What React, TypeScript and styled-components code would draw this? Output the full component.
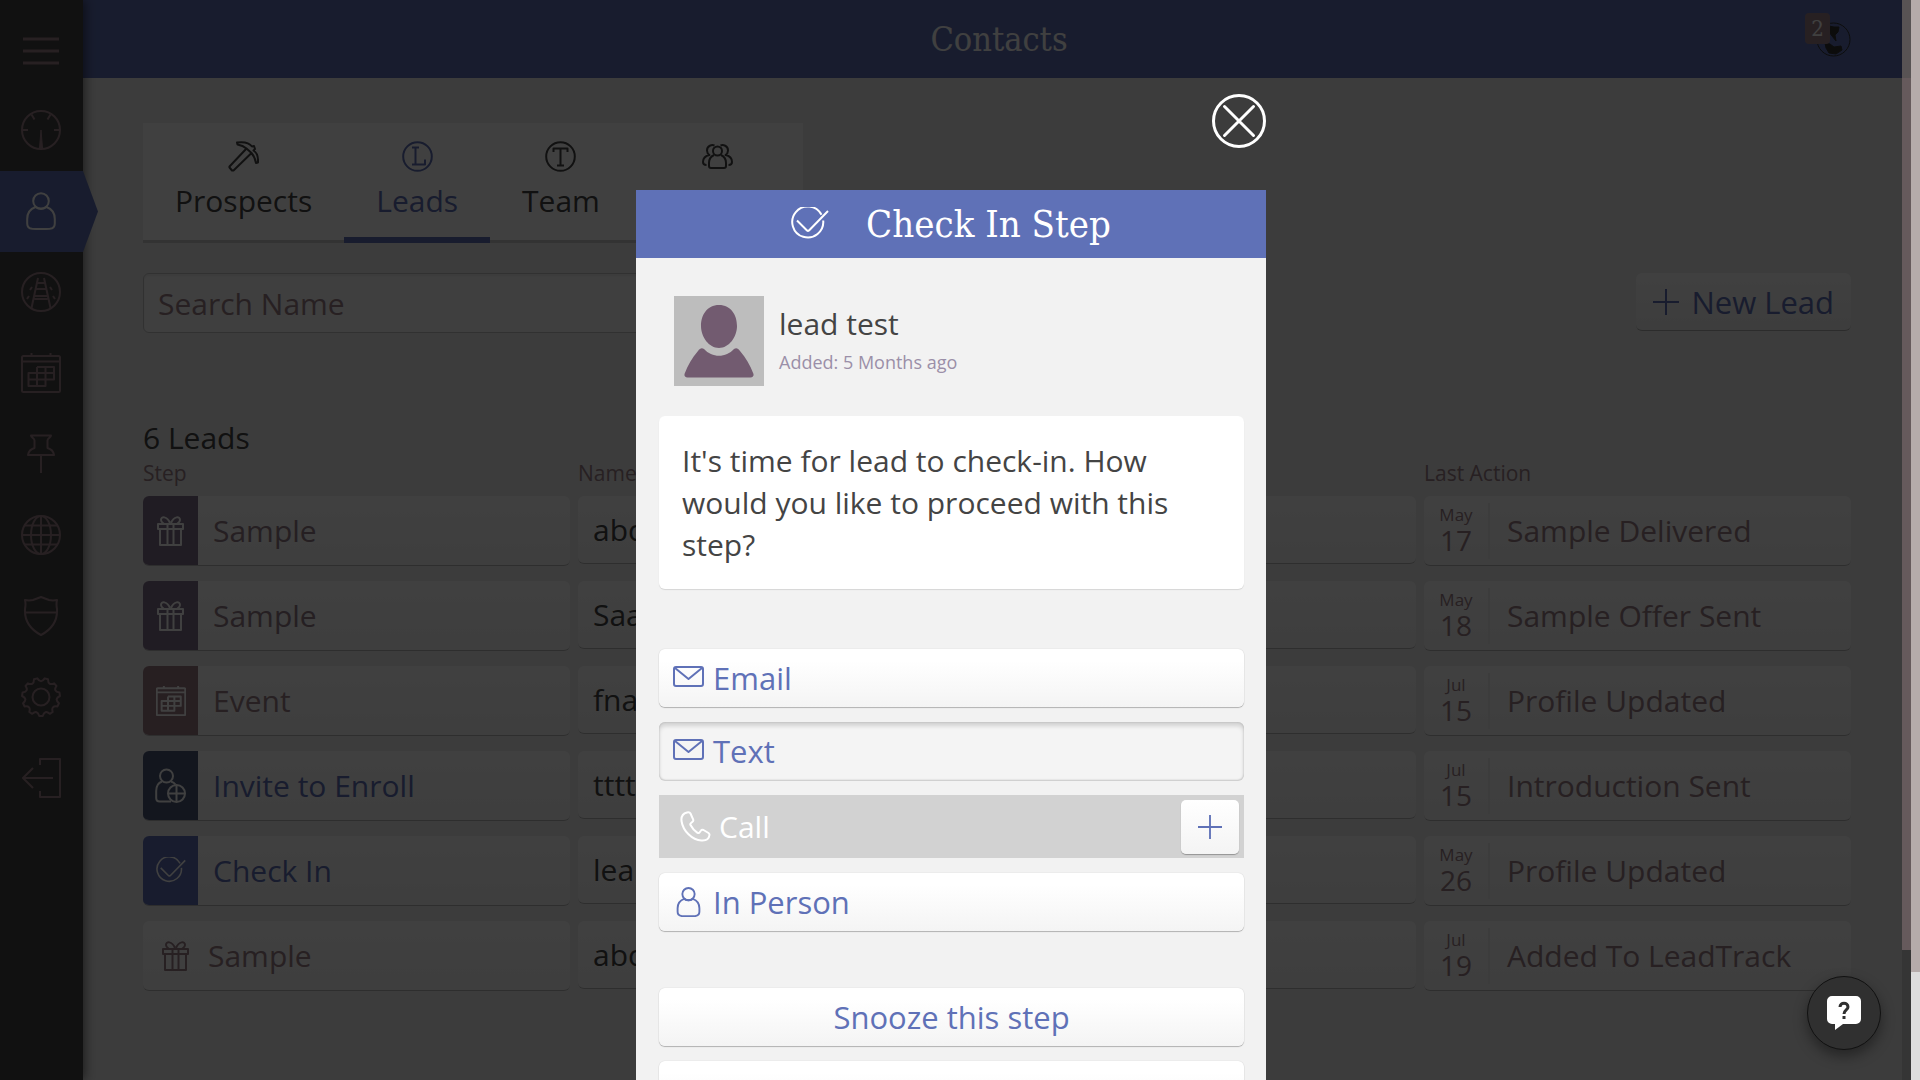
import React from "react";
import styled, { createGlobalStyle } from "styled-components";

const blue = "#5f71b7";
const mauve = "#9c8088";
const serif = `"Roboto Slab", "DejaVu Serif Condensed", "DejaVu Serif", serif`;

const GlobalStyle = createGlobalStyle`
  * { box-sizing: border-box; }
  body { margin: 0; overflow: hidden; background: #3c3c3c; }
  body, button, input {
    font-family: "Open Sans", "Noto Sans", sans-serif;
    font-size: 30px;
    line-height: 42px;
  }
  button { margin: 0; padding: 0; border: 0; background: none; cursor: pointer; }
  svg { display: block; flex: none; }
`;

const Window = styled.div`
  display: grid;
  grid-template-columns: minmax(0, 1fr) auto auto;
  height: 100vh;
  overflow: hidden;
`;

const Stage = styled.div`
  position: relative;
  display: grid;
  grid-template-columns: 83px minmax(0, 1fr);
  min-height: 0;
  overflow: hidden;
  background: #eeeeee;
`;

const ScrollTrack = styled.div<{ $bg: string; $top?: string }>`
  display: flex;
  flex-direction: column;
  width: 9px;
  background: ${(p) => p.$bg};
  border-top: ${(p) => (p.$top ? `78px solid ${p.$top}` : "0")};
`;

const ScrollThumb = styled.div<{ $bg: string; $size: string }>`
  height: ${(p) => p.$size};
  background: ${(p) => p.$bg};
`;

/* ---- side navigation ---- */

const Sidebar = styled.nav`
  position: relative;
  z-index: 1;
  display: flex;
  flex-direction: column;
  padding-top: 9px;
  background: #444444;
  box-shadow: 2px 0 10px rgba(0, 0, 0, 0.5);
`;

const NavItem = styled.a<{ $active?: boolean }>`
  position: relative;
  display: flex;
  align-items: center;
  justify-content: center;
  height: 81px;
  padding: 0 2px 2px 0;
  color: ${(p) => (p.$active ? "#ffffff" : mauve)};
  background: ${(p) => (p.$active ? blue : "transparent")};

  &:first-child { padding: 2px 2px 0 0; }

  &::after {
    content: "";
    display: ${(p) => (p.$active ? "block" : "none")};
    position: absolute;
    left: 100%;
    top: 0;
    width: 15px;
    height: 100%;
    background: ${blue};
    clip-path: polygon(0 0, 100% 50%, 0 100%);
  }
`;

/* ---- page ---- */

const Main = styled.div`
  display: flex;
  flex-direction: column;
  min-width: 0;
`;

const TopBar = styled.header`
  display: grid;
  grid-template-columns: 1fr auto 1fr;
  align-items: center;
  height: 78px;
  padding: 0 51px 0 64px;
  background: ${blue};
`;

const PageTitle = styled.h1`
  grid-column: 2;
  margin: 0;
  font: 400 34px/40px ${serif};
  color: #ffffff;
`;

const Alerts = styled.button`
  position: relative;
  justify-self: end;
  color: #333333;
`;

const Badge = styled.span`
  position: absolute;
  right: 21px;
  bottom: 13px;
  min-width: 25px;
  border-radius: 4px;
  background: ${mauve};
  color: #ffffff;
  font: 400 22px/31px ${serif};
  text-align: center;
`;

const Content = styled.main`
  padding: 45px 51px 0 60px;
`;

const Tabs = styled.div`
  display: flex;
  width: 660px;
  height: 120px;
  background: #ffffff;
`;

const Tab = styled.button<{ $active?: boolean }>`
  display: flex;
  flex-direction: column;
  align-items: center;
  gap: 8px;
  padding: 18px 32px 0;
  border-bottom: ${(p) => (p.$active ? `6px solid ${blue}` : "3px solid #cccccc")};
  color: ${(p) => (p.$active ? blue : "#444444")};

  &:last-child { flex: 1; }
`;

const Tools = styled.div`
  display: flex;
  justify-content: space-between;
  align-items: flex-start;
  margin-top: 30px;
`;

const SearchInput = styled.input`
  width: 660px;
  height: 60px;
  padding: 0 14px;
  border: 1px solid #c4c4c4;
  border-radius: 6px;
  background: #fbfbfb;
  box-shadow: inset 0 2px 2px rgba(0, 0, 0, 0.06);
  color: #444444;
  &::placeholder { color: ${mauve}; opacity: 1; }
`;

const NewLead = styled.button`
  display: flex;
  align-items: center;
  gap: 12px;
  height: 58px;
  padding: 0 17px;
  border-bottom: 1px solid #b0b0b0;
  border-radius: 6px;
  background: linear-gradient(#ffffff, #f2f2f2);
  color: ${blue};
  font-size: 31px;
`;

const Leads = styled.table`
  width: calc(100% + 8px);
  margin-top: 84px;
  border-collapse: collapse;
  table-layout: fixed;

  caption { text-align: left; color: #444444; }
  th {
    padding: 0 0 9px;
    font-size: 21px;
    font-weight: 400;
    line-height: 28px;
    text-align: left;
    color: ${mauve};
  }
  td { padding: 0 8px 15px 0; vertical-align: top; }
`;

const SideCol = styled.col`
  width: 25.35%;
`;

const Card = styled.div<{ $tone?: string; $short?: boolean }>`
  display: flex;
  align-items: center;
  height: ${(p) => (p.$short ? "68px" : "70px")};
  overflow: hidden;
  border-bottom: 1px solid #b8b8b8;
  border-radius: 6px;
  background: linear-gradient(#ffffff, #f6f6f6);
  color: ${(p) => p.$tone || "#444444"};
  white-space: nowrap;
`;

const Tile = styled.span<{ $bg?: string }>`
  display: flex;
  align-items: center;
  justify-content: center;
  align-self: stretch;
  width: ${(p) => (p.$bg ? "55px" : "50px")};
  padding-left: ${(p) => (p.$bg ? "0" : "15px")};
  margin-right: 15px;
  background: ${(p) => p.$bg || "transparent"};
  color: ${(p) => (p.$bg ? "#ffffff" : "inherit")};
`;

const NameText = styled.span`
  padding-left: 15px;
`;

const DateBox = styled.time`
  display: flex;
  flex-direction: column;
  align-items: center;
  width: 66px;
  margin-right: 17px;
  padding-bottom: 6px;
  border-right: 2px solid #f0f0f0;
  font-size: 28px;
  line-height: 26px;

  small { font-size: 17px; line-height: 24px; }
`;

/* ---- dialog ---- */

const Scrim = styled.div`
  position: absolute;
  inset: 0;
  z-index: 2;
  display: flex;
  justify-content: center;
  align-items: flex-start;
  padding-top: 94px;
  background: rgba(0, 0, 0, 0.75);
`;

const DialogColumn = styled.div`
  display: flex;
  flex-direction: column;
  width: 630px;
`;

const Close = styled.button`
  align-self: flex-end;
  margin-bottom: 42px;
  color: #ffffff;
`;

const Dialog = styled.section`
  background: #f2f2f2;
  color: #444444;
`;

const DialogHeader = styled.header`
  display: flex;
  align-items: center;
  justify-content: center;
  gap: 37px;
  height: 68px;
  background: ${blue};
  color: #ffffff;
`;

const DialogTitle = styled.h2`
  margin: 0;
  font: 400 38px/52px ${serif};
`;

const DialogBody = styled.div`
  display: flex;
  flex-direction: column;
  padding: 38px 22px 40px 23px;
`;

const Person = styled.div`
  display: flex;
  align-items: center;
  gap: 15px;
  margin-bottom: 30px;
  padding-left: 15px;
`;

const PersonText = styled.div`
  display: flex;
  flex-direction: column;
`;

const Added = styled.span`
  font-size: 18px;
  line-height: 34px;
  color: #9b8fa8;
`;

const Message = styled.p`
  margin: 0 0 60px;
  padding: 24px 23px 23px;
  border-radius: 6px;
  background: #ffffff;
  box-shadow: 0 1px 1px rgba(0, 0, 0, 0.12);
`;

const Actions = styled.div`
  display: flex;
  flex-direction: column;
  gap: 15px;
  margin-bottom: 57px;
`;

const Action = styled.button<{ $pressed?: boolean; $center?: boolean }>`
  display: flex;
  align-items: center;
  justify-content: ${(p) => (p.$center ? "center" : "flex-start")};
  gap: 9px;
  height: 58px;
  padding: 0 14px;
  border-radius: 6px;
  background: ${(p) => (p.$pressed ? "#f4f4f4" : "linear-gradient(#ffffff 20%, #f4f4f4)")};
  box-shadow: ${(p) =>
    p.$pressed
      ? "inset 0 4px 4px rgba(0,0,0,.14), inset 0 0 2px rgba(0,0,0,.2), 0 1px 0 #d0d0d0"
      : "0 0 1px rgba(0,0,0,.25), 0 1px 1px rgba(0,0,0,.25)"};
  color: ${blue};
  font-size: 31px;
`;

const CallRow = styled.div`
  display: flex;
  align-items: center;
  justify-content: space-between;
  height: 63px;
  padding: 0 5px 0 21px;
  background: #d2d2d2;
`;

const CallButton = styled.button`
  display: flex;
  align-items: center;
  gap: 8px;
  color: #ffffff;
`;

const AddCall = styled.button`
  display: flex;
  align-items: center;
  justify-content: center;
  width: 58px;
  height: 54px;
  border-radius: 5px;
  background: linear-gradient(#ffffff, #f4f4f4);
  box-shadow: 0 1px 1px rgba(0, 0, 0, 0.3);
  color: ${blue};
`;

const Help = styled.button`
  position: absolute;
  right: 21px;
  bottom: 30px;
  z-index: 3;
  display: flex;
  align-items: center;
  justify-content: center;
  width: 74px;
  height: 74px;
  border: 1px solid #111111;
  border-radius: 50%;
  background: #303030;
  box-shadow: 0 6px 14px rgba(0, 0, 0, 0.4);
`;

/* ---- drawings ---- */

type IconProps = { w: number; h: number; box: string; sw?: number; children: React.ReactNode };

const Icon = ({ w, h, box, sw = 2, children }: IconProps) => (
  <svg width={w} height={h} viewBox={box} fill="none" stroke="currentColor" strokeWidth={sw} strokeLinejoin="round" aria-hidden="true">
    {children}
  </svg>
);

const MenuIcon = () => (
  <Icon w={36} h={28} box="0 0 36 28" sw={3}><path d="M0 2h36M0 14h36M0 26h36" /></Icon>
);
const GaugeIcon = () => (
  <Icon w={40} h={40} box="0 0 40 40">
    <circle cx="20" cy="20" r="19" />
    <path d="M1 20h6M33 20h6M10.500 4.500l3 5M29.500 4.500l-3 5" />
    <path d="M20 20l-1.500 18h3z" fill="currentColor" strokeWidth="1" />
  </Icon>
);
const PersonIcon = ({ w = 30, h = 38, sw = 2 }) => (
  <Icon w={w} h={h} box="0 0 30 38" sw={sw}>
    <circle cx="15" cy="9" r="7.800" />
    <path d="M9.500 15C4 17 1.200 21 1.200 27v4.500c0 3.500 2 5 5 5.300q8.800.6 17.600 0c3-.3 5-1.800 5-5.300V27c0-6-2.800-10-8.300-12q-5.500 3.500-11 0z" />
  </Icon>
);
const TrackIcon = () => (
  <Icon w={40} h={40} box="0 0 40 40">
    <circle cx="20" cy="20" r="19" />
    <path d="M17 6L10.500 36M23 6l6.500 30M16 11h8M15 17h10M13.500 27h13M14 24h12M8 24l-2 3M32 24l2 3M11 15l-2 3M29 15l2 3" />
  </Icon>
);
const CalendarIcon = ({ s = 40, sw = 2 }) => (
  <Icon w={s} h={s} box="0 0 40 40" sw={sw}>
    <rect x="1" y="3" width="38" height="36" rx="1.500" />
    <path d="M1 8.500h38M10.500 0v3M29.500 0v3M16 14h17v12.500h-8.500V33H7.500V20H33M16 14v19M24.500 14v12.500M7.500 26.500h17" />
  </Icon>
);
const PinIcon = () => (
  <Icon w={28} h={40} box="0 0 28 40">
    <path d="M4 1.500h20c0 2-3.500 2.500-3.500 5v7.500c3.500 1 6 3.500 6.500 7H1c.5-3.500 3-6 6.500-7V6.500C7.500 4 4 3.500 4 1.500zM14 21v18" />
  </Icon>
);
const GlobeIcon = () => (
  <Icon w={40} h={40} box="0 0 40 40">
    <circle cx="20" cy="20" r="19" /><ellipse cx="20" cy="20" rx="10" ry="19" />
    <path d="M20 1v38M1 20h38M4 10.500h32M4 29.500h32" />
  </Icon>
);
const ShieldIcon = () => (
  <Icon w={36} h={40} box="0 0 36 40">
    <path d="M2 4q4 .8 8 0l8-3 8 3q4 .8 8 0Q33 8 34 13q1 17-16 26Q1 30 2 13 3 8 2 4zM2 16.500h32" />
  </Icon>
);
const GearIcon = () => {
  const points = Array.from({ length: 11 }, (_, i) => {
    const at = (r: number, o: number) => {
      const a = ((i + o) / 11) * Math.PI * 2 + Math.PI / 2;
      return `${(20 + r * Math.cos(a)).toFixed(2)} ${(20 + r * Math.sin(a)).toFixed(2)}`;
    };
    return `${i ? "L" : "M"}${at(19, -0.16)}L${at(19, 0.16)}Q${at(13, 0.5)} ${at(19, 0.84)}`;
  }).join("");
  return <Icon w={40} h={40} box="0 0 40 40"><path d={points + "z"} /><circle cx="20" cy="20" r="8.500" /></Icon>;
};
const LogoutIcon = () => (
  <Icon w={40} h={40} box="0 0 40 40"><path d="M19 7V1h20v38H19v-6M32 20H2M12 10L2 20l10 10" /></Icon>
);
const PickIcon = () => (
  <Icon w={31} h={31} box="0 0 31 31">
    <path d="M18.500 7.500L1.500 25.500a1 1 0 000 1l2.500 3h1.500L23.500 12M9 1.500q11-1.500 15 4l2-.5 1 3-1.500 1.500q5 3 4.500 12l-2 .5q-1-6-4.500-10L18.500 7.500Q15 4.500 9.500 3.500z" />
  </Icon>
);
const LetterIcon = ({ d }: { d: string }) => (
  <Icon w={31} h={31} box="0 0 31 31"><circle cx="15.500" cy="15.500" r="14.300" /><path d={d} /></Icon>
);
const GroupIcon = () => (
  <Icon w={31} h={31} box="0 0 31 31">
    <circle cx="15.500" cy="10" r="4.500" />
    <path d="M12 14c-3.500 1.500-5 4-5 8v3c0 1.500 1 2 2 2h13c1 0 2-.5 2-2v-3c0-4-1.500-6.500-5-8M12.500 4.500C10 3.500 5 4.500 5 9.500c0 2 1 3.500 2.500 4.500C3 15 1 17.500 1 21c0 2 1 3 3.500 3M18.500 4.500C21 3.500 26 4.500 26 9.500c0 2-1 3.500-2.500 4.500 4.500 1 6.500 3.500 6.500 7 0 2-1 3-3.500 3" />
  </Icon>
);
const PlusIcon = ({ s = 26 }) => (
  <Icon w={s} h={s} box="0 0 26 26"><path d="M13 0v26M0 13h26" /></Icon>
);
const GiftIcon = () => (
  <Icon w={27} h={30} box="0 0 27 30">
    <path d="M1 8h25v5H1zM3 13v16h21V13M10.500 8v21M16.500 8v21M13 7C10 0 4 0 4 4c0 2 2 3 3 4M14 7c3-7 9-7 9-3 0 2-2 3-3 4" />
  </Icon>
);
const EnrollIcon = () => (
  <Icon w={31} h={36} box="0 0 31 36">
    <circle cx="11.500" cy="8" r="6.500" />
    <path d="M7 13.500C3 15 1.200 18 1.200 23v7c0 2.500 1.500 3.500 3.500 3.500H16M16 13.500q3 1 4.500 3" />
    <circle cx="21.500" cy="25.500" r="8.500" /><path d="M21.500 17v17M13 25.500h17" />
  </Icon>
);
const CheckIcon = ({ w = 38, h = 35 }) => (
  <Icon w={w} h={h} box="0 0 38 35">
    <path d="M30.500 7.800A15.500 15.500 0 1032.200 13.500M6 13.500l10 10q1 .8 2 0L37 4" />
  </Icon>
);
const MailIcon = () => (
  <Icon w={31} h={24} box="0 0 31 24"><rect x="1" y="1" width="29" height="19" rx="2" /><path d="M2 2l13.500 11L29 2" /></Icon>
);
const PhoneIcon = () => (
  <Icon w={31} h={31} box="0 0 31 31">
    <path d="M7 1.500C3 2.500 1 5.500 1.500 10 3 20 12 29 21.500 29.500c4.500.3 7.500-1.500 8-5.500.1-1-.3-1.500-1-2l-5-3c-1-.5-2-.3-2.500.5l-1.500 2c-.5.700-1.300.8-2 .3-3-2-5.500-4.800-7-7.800-.4-.8-.2-1.500.5-2l1.500-1.200c.8-.6 1-1.500.6-2.500L10.500 2.500c-.5-1-2-1.300-3.500-1z" />
  </Icon>
);
const CloseIcon = () => (
  <Icon w={54} h={54} box="0 0 54 54" sw={3}><circle cx="27" cy="27" r="25.500" /><path d="M12.500 12.500l29 29M41.500 12.500l-29 29" strokeLinecap="round" /></Icon>
);
const WorldIcon = () => (
  <Icon w={35} h={35} box="0 0 35 35" sw={1}>
    <circle cx="17.500" cy="17.500" r="16.500" />
    <path fill="currentColor" d="M13 4l5 1 5 0-1 5-3 3 1 6-4-5-3-4zM9 21l5 1 4 3 7-1 1 4-6 4-7-1-3-5z" />
  </Icon>
);
const Avatar = () => (
  <svg width="90" height="90" viewBox="0 0 90 90" role="img" aria-label="lead test">
    <path fill="#bdbdbd" d="M0 0h90v90H0z" />
    <path fill="#725b70" d="M45 9c12 0 18 10 18 21S55 52 45 52 27 41 27 30 33 9 45 9zM30 53c8 9 22 9 30 0 2-1.500 4-1 6 2 6 7 10 14 13.500 23 .5 2-1 3.500-3 3.500h-63c-2 0-3.500-1.500-3-3.500C14 69 18 62 24 55c2-3 4-3.500 6-2z" />
  </svg>
);

/* ---- data ---- */

const nav = [
  { label: "Menu", icon: <MenuIcon /> },
  { label: "Dashboard", icon: <GaugeIcon /> },
  { label: "Contacts", icon: <PersonIcon />, active: true },
  { label: "Track", icon: <TrackIcon /> },
  { label: "Calendar", icon: <CalendarIcon /> },
  { label: "Pinned", icon: <PinIcon /> },
  { label: "Web", icon: <GlobeIcon /> },
  { label: "Shield", icon: <ShieldIcon /> },
  { label: "Settings", icon: <GearIcon /> },
  { label: "Log out", icon: <LogoutIcon /> },
];

const gift = <GiftIcon />;
const rows = [
  { step: "Sample", icon: gift, bg: "#80708a", tone: "#947c88", name: "abc", month: "May", day: "17", action: "Sample Delivered" },
  { step: "Sample", icon: gift, bg: "#80708a", tone: "#947c88", name: "Saa", month: "May", day: "18", action: "Sample Offer Sent" },
  { step: "Event", icon: <CalendarIcon s={30} sw={2.6} />, bg: "#9c7c84", tone: mauve, name: "fna", month: "Jul", day: "15", action: "Profile Updated" },
  { step: "Invite to Enroll", icon: <EnrollIcon />, bg: "#4c5878", tone: blue, name: "tttt", month: "Jul", day: "15", action: "Introduction Sent" },
  { step: "Check In", icon: <CheckIcon w={30} h={28} />, bg: blue, tone: blue, name: "lea", month: "May", day: "26", action: "Profile Updated" },
  { step: "Sample", icon: gift, tone: mauve, name: "abc", month: "Jul", day: "19", action: "Added To LeadTrack" },
];

export default function App() {
  return (
    <Window>
      <GlobalStyle />
      <Stage>
        <Sidebar aria-label="Main">
          {nav.map((n) => (
            <NavItem key={n.label} href="#" aria-label={n.label} $active={n.active}>{n.icon}</NavItem>
          ))}
        </Sidebar>
        <Main>
          <TopBar>
            <PageTitle>Contacts</PageTitle>
            <Alerts aria-label="Notifications"><WorldIcon /><Badge>2</Badge></Alerts>
          </TopBar>
          <Content>
            <Tabs role="tablist">
              <Tab role="tab"><PickIcon />Prospects</Tab>
              <Tab role="tab" aria-selected="true" $active><LetterIcon d="M10 6.500h7M13.500 6.500v17M10 23.500h13v-5" />Leads</Tab>
              <Tab role="tab"><LetterIcon d="M8.500 11V7.500h14V11M15.500 7.500v17M12 24.500h7" />Team</Tab>
              <Tab role="tab" aria-label="Groups"><GroupIcon /></Tab>
            </Tabs>
            <Tools>
              <SearchInput type="search" placeholder="Search Name" aria-label="Search Name" />
              <NewLead><PlusIcon />New Lead</NewLead>
            </Tools>
            <Leads>
              <caption>6 Leads</caption>
              <colgroup><SideCol /><col /><SideCol /></colgroup>
              <thead><tr><th>Step</th><th>Name</th><th>Last Action</th></tr></thead>
              <tbody>
                {rows.map((r, i) => (
                  <tr key={i}>
                    <td><Card $tone={r.tone}><Tile $bg={r.bg}>{r.icon}</Tile>{r.step}</Card></td>
                    <td><Card $short><NameText>{r.name}</NameText></Card></td>
                    <td><Card $tone={mauve}><DateBox><small>{r.month}</small>{r.day}</DateBox>{r.action}</Card></td>
                  </tr>
                ))}
              </tbody>
            </Leads>
          </Content>
        </Main>
        <Scrim>
          <DialogColumn>
            <Close aria-label="Close"><CloseIcon /></Close>
            <Dialog role="dialog" aria-labelledby="dialog-title">
              <DialogHeader>
                <CheckIcon />
                <DialogTitle id="dialog-title">Check In Step</DialogTitle>
              </DialogHeader>
              <DialogBody>
                <Person>
                  <Avatar />
                  <PersonText><span>lead test</span><Added>Added: 5 Months ago</Added></PersonText>
                </Person>
                <Message>It's time for lead to check-in. How would you like to proceed with this step?</Message>
                <Actions>
                  <Action><MailIcon />Email</Action>
                  <Action $pressed><MailIcon />Text</Action>
                  <CallRow>
                    <CallButton><PhoneIcon />Call</CallButton>
                    <AddCall aria-label="Add call"><PlusIcon s={24} /></AddCall>
                  </CallRow>
                  <Action><PersonIcon w={31} h={30} sw={2.4} />In Person</Action>
                </Actions>
                <Actions>
                  <Action $center>Snooze this step</Action>
                  <Action $center aria-label="Skip this step" />
                </Actions>
              </DialogBody>
            </Dialog>
          </DialogColumn>
        </Scrim>
        <Help aria-label="Help">
          <svg width="34" height="34" viewBox="0 0 34 34" aria-hidden="true">
            <path fill="#fff" d="M5 0h24a5 5 0 015 5v18a5 5 0 01-5 5H16l-8 6v-6H5a5 5 0 01-5-5V5a5 5 0 015-5z" />
            <path fill="none" stroke="#303030" strokeWidth="3" d="M13 11c0-5 8-5 8 0 0 3-4 3-4 7M17 20v3" />
          </svg>
        </Help>
      </Stage>
      <ScrollTrack $bg="#353535" $top="#585354"><ScrollThumb $bg="#665a5c" $size="87%" /></ScrollTrack>
      <ScrollTrack $bg="#dcdcdc"><ScrollThumb $bg="#b5abaa" $size="90%" /></ScrollTrack>
    </Window>
  );
}
